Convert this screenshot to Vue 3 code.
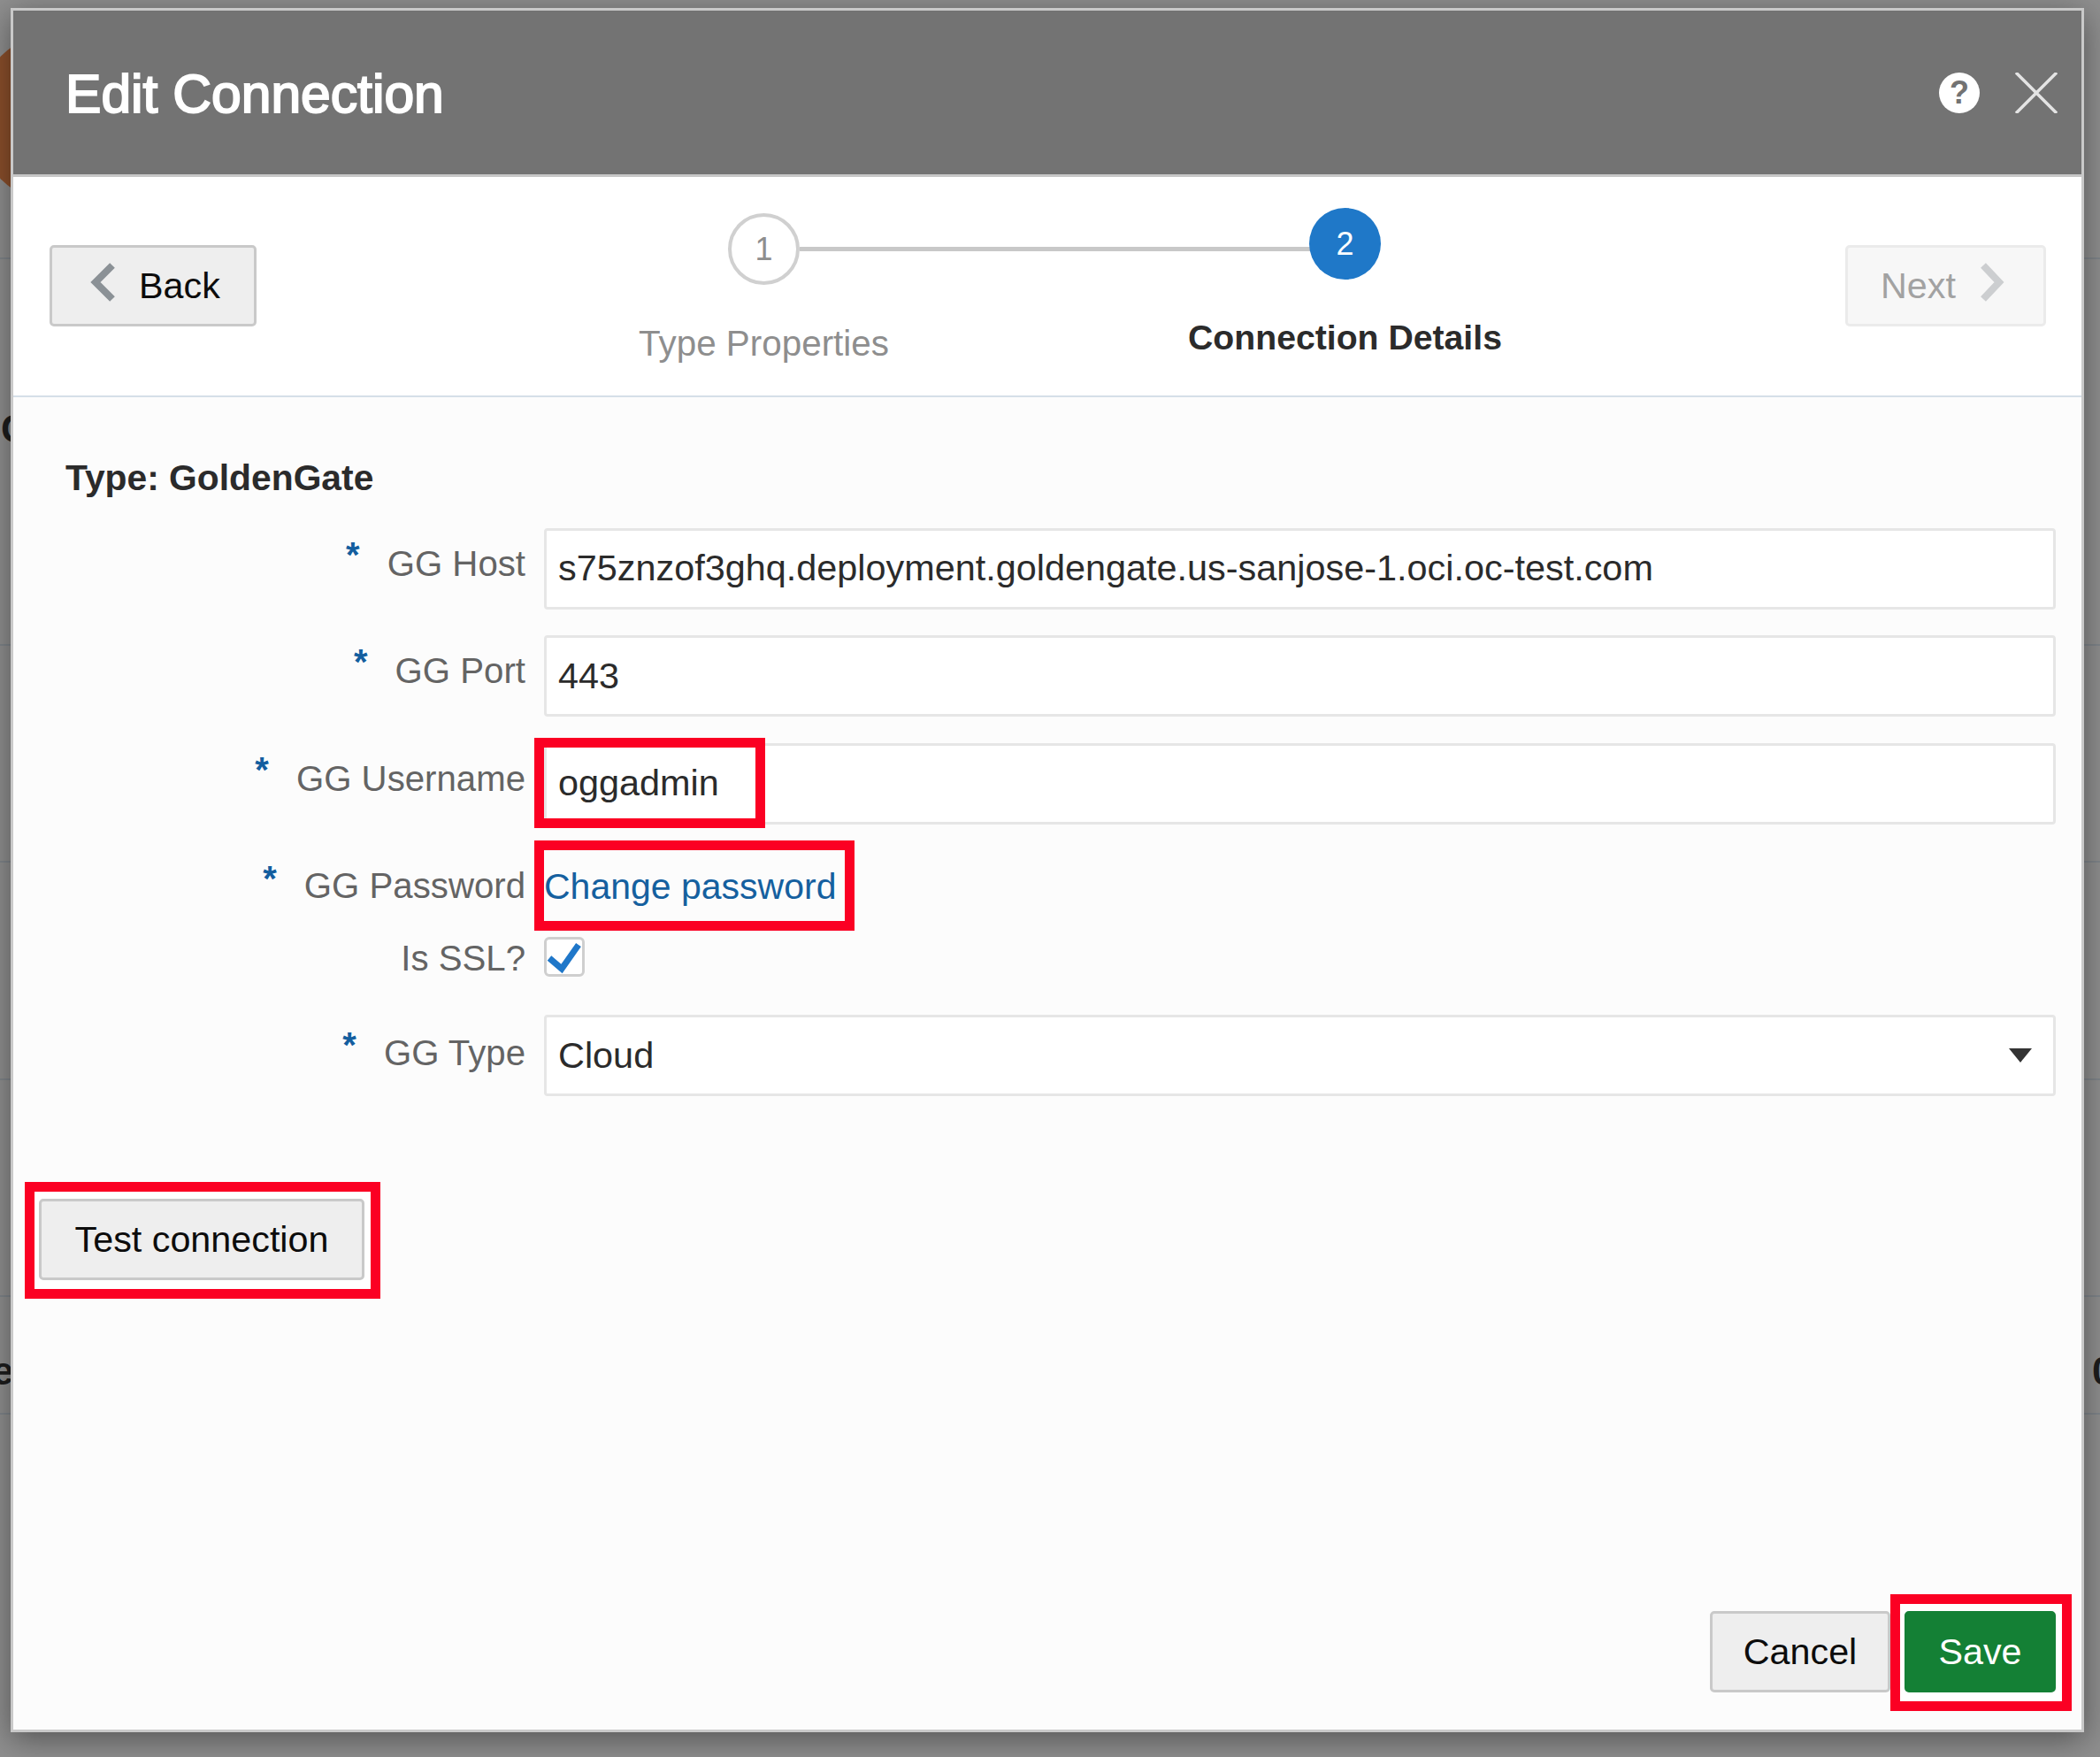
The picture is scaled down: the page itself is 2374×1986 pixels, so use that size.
<script setup>
const lines = [291, 728, 973, 1219, 1464, 1597]
</script>

<template>
  <div class="page">
    <div class="blob"></div>
    <div v-for="y in lines" :key="y" class="bg-line" :style="{ top: y + 'px' }"></div>
    <span class="frag frag-c">C</span>
    <span class="frag frag-e">e</span>
    <span class="frag frag-o">0</span>

    <div class="dialog">
      <header class="head">
        <h1 class="title">Edit Connection</h1>
        <div class="head-icons">
          <span class="help">?</span>
          <svg class="close" viewBox="0 0 48 46" width="48" height="46">
            <path d="M1 0 47 46M47 0 1 46" fill="none" stroke="#e4e4e4" stroke-width="3.5" />
          </svg>
        </div>
      </header>

      <section class="wizard">
        <button class="btn nav back">
          <svg class="chev" width="28" height="44" viewBox="0 0 28 44"><path d="M25 3 6 22l19 19" fill="none" stroke="#8b9196" stroke-width="8" /></svg>
          <span>Back</span>
        </button>
        <div class="train">
          <div class="step step-one">
            <div class="circle">1</div>
            <div class="step-label">Type Properties</div>
          </div>
          <div class="step step-two">
            <div class="circle">2</div>
            <div class="step-label">Connection Details</div>
          </div>
        </div>
        <button class="btn nav next">
          <span>Next</span>
          <svg class="chev" width="28" height="44" viewBox="0 0 28 44"><path d="M4 3 22 22 4 41" fill="none" stroke="#ccced0" stroke-width="8" /></svg>
        </button>
      </section>

      <section class="content">
        <div class="type-title">Type: GoldenGate</div>

        <div class="form">
          <div class="row">
            <div class="label"><i>*</i><span>GG Host</span></div>
            <div class="field">s75znzof3ghq.deployment.goldengate.us-sanjose-1.oci.oc-test.com</div>
          </div>
          <div class="row">
            <div class="label"><i>*</i><span>GG Port</span></div>
            <div class="field">443</div>
          </div>
          <div class="row">
            <div class="label"><i>*</i><span>GG Username</span></div>
            <div class="field">oggadmin<b class="mark mark-user"></b></div>
          </div>
          <div class="row row-pass">
            <div class="label"><i>*</i><span>GG Password</span></div>
            <div class="link-wrap"><a class="link">Change password</a><b class="mark mark-pass"></b></div>
          </div>
          <div class="row row-ssl">
            <div class="label"><span>Is SSL?</span></div>
            <div class="check">
              <svg width="46" height="45" viewBox="0 0 46 45"><path d="M6 24l14 12L39 9" fill="none" stroke="#1f77c9" stroke-width="7" /></svg>
            </div>
          </div>
          <div class="row row-type">
            <div class="label"><i>*</i><span>GG Type</span></div>
            <div class="field select">
              <span>Cloud</span>
              <svg width="26" height="16" viewBox="0 0 26 16"><path d="M0 0h26L13 16z" fill="#333" /></svg>
            </div>
          </div>
        </div>

        <div class="test-wrap">
          <button class="btn test">Test connection</button>
        </div>

        <footer class="foot">
          <button class="btn cancel">Cancel</button>
          <button class="btn save">Save</button>
        </footer>
      </section>
    </div>
  </div>
</template>

<style>
html, body { margin: 0; padding: 0; }
</style>

<style scoped>
.page {
  position: relative;
  width: 2374px;
  height: 1986px;
  overflow: hidden;
  background: #8f8f8f;
  font-family: "Liberation Sans", Arial, sans-serif;
  color: #2b2b2b;
}
.blob {
  position: absolute;
  left: -28px;
  top: 35px;
  width: 196px;
  height: 196px;
  border-radius: 50%;
  background: #8b4f2b;
}
.bg-line {
  position: absolute;
  left: 0;
  right: 0;
  height: 2px;
  background: #7f858a;
}
.frag {
  position: absolute;
  font-size: 44px;
  font-weight: 700;
  color: #1d1d1d;
  line-height: 50px;
}
.frag-c { left: 1px; top: 460px; }
.frag-e { left: -9px; top: 1525px; }
.frag-o { left: 2365px; top: 1525px; }

.dialog {
  position: absolute;
  left: 12px;
  top: 9px;
  width: 2344px;
  height: 1949px;
  box-sizing: border-box;
  border: 3px solid #c9c9c9;
  background: #fcfcfc;
  box-shadow: 0 8px 34px rgba(0, 0, 0, 0.42);
  display: flex;
  flex-direction: column;
}
.head {
  height: 188px;
  flex: none;
  box-sizing: border-box;
  background: #737373;
  border-bottom: 3px solid #c6c6c6;
  display: flex;
  align-items: center;
  justify-content: space-between;
  padding: 0 27px 0 59px;
}
.title {
  margin: 0;
  font-size: 60.6px;
  font-weight: 400;
  -webkit-text-stroke: 2px #fff;
  color: #fff;
  position: relative;
  top: 1px;
}
.head-icons {
  display: flex;
  align-items: center;
  gap: 40px;
}
.help {
  width: 46px;
  height: 46px;
  border-radius: 50%;
  background: #fff;
  color: #737373;
  font-size: 36px;
  font-weight: 700;
  line-height: 46px;
  text-align: center;
}
.close { display: block; }

.wizard {
  height: 249px;
  flex: none;
  box-sizing: border-box;
  background: #fff;
  border-bottom: 2px solid #d5dfe8;
  display: flex;
  align-items: flex-start;
  padding: 35px 40px 0 41px;
}
.btn {
  box-sizing: border-box;
  height: 92px;
  border: 3px solid #c9c9c9;
  border-radius: 5px;
  background: #eee;
  font: inherit;
  font-size: 41.3px;
  color: #0c0c0c;
  padding: 0;
}
.nav {
  margin-top: 42px;
  flex: none;
  display: flex;
  align-items: center;
}
.chev { position: relative; top: -4px; }
.back {
  width: 234px;
  padding-left: 43px;
  gap: 27px;
}
.next {
  width: 227px;
  padding-left: 37px;
  gap: 27px;
  background: #f7f7f7;
  border-color: #ebebeb;
  color: #a2a2a2;
}
.train {
  flex: 1;
  display: flex;
  padding-left: 245px;
}
.step {
  position: relative;
  width: 657px;
  display: flex;
  flex-direction: column;
  align-items: center;
}
.step-one { margin-top: 6px; color: #8e8e8e; }
.step-one::after {
  content: "";
  position: absolute;
  left: 369px;
  width: 578px;
  top: 38px;
  height: 5px;
  background: #c8c8c8;
}
.circle {
  box-sizing: border-box;
  width: 81px;
  height: 81px;
  border-radius: 50%;
  text-align: center;
  font-size: 36px;
}
.step-one .circle {
  border: 4px solid #d0d0d0;
  line-height: 73px;
  background: #fff;
  color: #8e8e8e;
}
.step-two .circle {
  background: #1f78c8;
  color: #fff;
  line-height: 81px;
  position: relative;
  z-index: 1;
}
.step-label {
  margin-top: 42px;
  font-size: 40.4px;
  line-height: 48px;
  white-space: nowrap;
}
.step-two .step-label { font-weight: 700; font-size: 39.2px; color: #2b2b2b; }

.content {
  flex: 1;
  display: flex;
  flex-direction: column;
  min-height: 0;
}
.type-title {
  margin: 67px 0 0 59px;
  font-size: 40.8px;
  line-height: 48px;
  font-weight: 700;
  color: #2b2b2b;
}
.form {
  margin-top: 32.5px;
  display: flex;
  flex-direction: column;
  gap: 29.5px;
}
.row {
  display: flex;
  align-items: flex-start;
  gap: 21px;
}
.label {
  width: 564px;
  margin-left: 15px;
  flex: none;
  display: flex;
  justify-content: flex-end;
  align-items: flex-start;
  gap: 31px;
  padding-top: 17px;
  font-size: 40.2px;
  line-height: 48px;
  color: #646464;
  white-space: nowrap;
}
.label i {
  font-style: normal;
  font-weight: 700;
  color: #135e9f;
  font-size: 40px;
  line-height: 40px;
  margin-top: -7px;
}
.field {
  position: relative;
  box-sizing: border-box;
  width: 1709px;
  height: 92px;
  border: 3px solid #e6e6e6;
  border-radius: 4px;
  background: #fff;
  padding: 0 13px;
  display: flex;
  align-items: center;
  font-size: 41.4px;
  color: #2b2b2b;
  white-space: nowrap;
}
.select { justify-content: space-between; padding-right: 24px; }
.row-pass { height: 81.5px; align-items: center; }
.row-pass .label { padding-top: 0; align-items: center; }
.row-pass .label i { margin-top: -17px; }
.link-wrap { position: relative; }
.link {
  display: block;
  font-size: 41px;
  line-height: 48px;
  color: #15609f;
  white-space: nowrap;
}
.row-ssl { margin-top: -13px; height: 45px; align-items: flex-start; }
.row-ssl .label { padding-top: 1px; }
.check {
  box-sizing: border-box;
  width: 46px;
  height: 45px;
  border: 3px solid #cfcfcf;
  border-radius: 6px;
  background: #fff;
  position: relative;
}
.check svg { position: absolute; left: -3px; top: -3px; }
.row-type { margin-top: 13.5px; }
.row-type .label { padding-top: 20px; }
.row-type .label i { margin-top: -6px; }
.mark {
  position: absolute;
  box-sizing: border-box;
  border: 11px solid #fb0023;
  pointer-events: none;
}
.mark-user { left: -14px; top: -8.5px; width: 261px; height: 102px; }
.mark-pass { left: -11px; top: -27.75px; width: 362px; height: 102px; }

.test-wrap {
  position: relative;
  align-self: flex-start;
  margin: 116px 0 0 29px;
}
.test-wrap::before {
  content: "";
  position: absolute;
  left: -16px;
  top: -19px;
  width: 402px;
  height: 132px;
  box-sizing: border-box;
  border: 11px solid #fb0023;
  background: #fff;
}
.test {
  position: relative;
  display: block;
  width: 368px;
}
.foot {
  position: relative;
  margin-top: auto;
  display: flex;
  justify-content: flex-end;
  gap: 16px;
  padding: 0 29px 42px 0;
}
.foot::before {
  content: "";
  position: absolute;
  right: 11px;
  bottom: 21px;
  width: 205px;
  height: 132px;
  box-sizing: border-box;
  border: 11px solid #fb0023;
  background: #fff;
}
.cancel {
  position: relative;
  width: 204px;
}
.save {
  position: relative;
  width: 171px;
  background: #148035;
  border-color: #148035;
  color: #fff;
}
</style>
